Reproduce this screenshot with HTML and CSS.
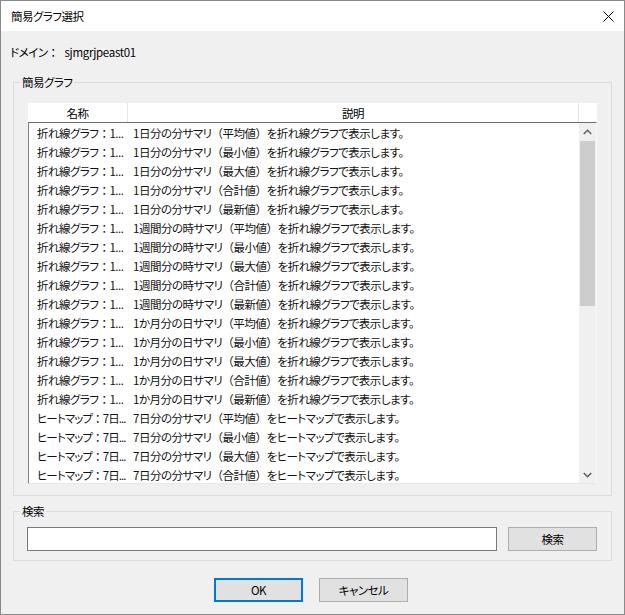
FILE: index.html
```html
<!DOCTYPE html>
<html lang="ja">
<head>
<meta charset="utf-8">
<title>簡易グラフ選択</title>
<link rel="stylesheet" href="styles.css">
</head>
<body>
<div class="window">
  <div class="titlebar">
    <span class="title">簡易グラフ選択</span>
    <span class="close"><svg width="11" height="11" viewBox="0 0 11 11"><path d="M0.5 0.5 L10.5 10.5 M10.5 0.5 L0.5 10.5" stroke="#000" stroke-width="1" fill="none"/></svg></span>
  </div>
  <div class="domain"><span>ドメイン<span class="fw">：</span></span><span class="domain-value">sjmgrjpeast01</span></div>

  <fieldset class="group group-graph">
    <legend>簡易グラフ</legend>
    <div class="header">
      <div class="hcol hcol-name">名称</div>
      <div class="hcol hcol-desc">説明</div>
      <div class="hcol hcol-rest"></div>
    </div>
    <div class="list">
      <div class="rows">
        <div class="row"><span class="c1">折れ線グラフ<span class="fw">：</span>1...</span><span class="c2">1日分の分サマリ<span class="fw">（</span>平均値<span class="fw">）</span>を折れ線グラフで表示します。</span></div>
        <div class="row"><span class="c1">折れ線グラフ<span class="fw">：</span>1...</span><span class="c2">1日分の分サマリ<span class="fw">（</span>最小値<span class="fw">）</span>を折れ線グラフで表示します。</span></div>
        <div class="row"><span class="c1">折れ線グラフ<span class="fw">：</span>1...</span><span class="c2">1日分の分サマリ<span class="fw">（</span>最大値<span class="fw">）</span>を折れ線グラフで表示します。</span></div>
        <div class="row"><span class="c1">折れ線グラフ<span class="fw">：</span>1...</span><span class="c2">1日分の分サマリ<span class="fw">（</span>合計値<span class="fw">）</span>を折れ線グラフで表示します。</span></div>
        <div class="row"><span class="c1">折れ線グラフ<span class="fw">：</span>1...</span><span class="c2">1日分の分サマリ<span class="fw">（</span>最新値<span class="fw">）</span>を折れ線グラフで表示します。</span></div>
        <div class="row"><span class="c1">折れ線グラフ<span class="fw">：</span>1...</span><span class="c2">1週間分の時サマリ<span class="fw">（</span>平均値<span class="fw">）</span>を折れ線グラフで表示します。</span></div>
        <div class="row"><span class="c1">折れ線グラフ<span class="fw">：</span>1...</span><span class="c2">1週間分の時サマリ<span class="fw">（</span>最小値<span class="fw">）</span>を折れ線グラフで表示します。</span></div>
        <div class="row"><span class="c1">折れ線グラフ<span class="fw">：</span>1...</span><span class="c2">1週間分の時サマリ<span class="fw">（</span>最大値<span class="fw">）</span>を折れ線グラフで表示します。</span></div>
        <div class="row"><span class="c1">折れ線グラフ<span class="fw">：</span>1...</span><span class="c2">1週間分の時サマリ<span class="fw">（</span>合計値<span class="fw">）</span>を折れ線グラフで表示します。</span></div>
        <div class="row"><span class="c1">折れ線グラフ<span class="fw">：</span>1...</span><span class="c2">1週間分の時サマリ<span class="fw">（</span>最新値<span class="fw">）</span>を折れ線グラフで表示します。</span></div>
        <div class="row"><span class="c1">折れ線グラフ<span class="fw">：</span>1...</span><span class="c2">1か月分の日サマリ<span class="fw">（</span>平均値<span class="fw">）</span>を折れ線グラフで表示します。</span></div>
        <div class="row"><span class="c1">折れ線グラフ<span class="fw">：</span>1...</span><span class="c2">1か月分の日サマリ<span class="fw">（</span>最小値<span class="fw">）</span>を折れ線グラフで表示します。</span></div>
        <div class="row"><span class="c1">折れ線グラフ<span class="fw">：</span>1...</span><span class="c2">1か月分の日サマリ<span class="fw">（</span>最大値<span class="fw">）</span>を折れ線グラフで表示します。</span></div>
        <div class="row"><span class="c1">折れ線グラフ<span class="fw">：</span>1...</span><span class="c2">1か月分の日サマリ<span class="fw">（</span>合計値<span class="fw">）</span>を折れ線グラフで表示します。</span></div>
        <div class="row"><span class="c1">折れ線グラフ<span class="fw">：</span>1...</span><span class="c2">1か月分の日サマリ<span class="fw">（</span>最新値<span class="fw">）</span>を折れ線グラフで表示します。</span></div>
        <div class="row"><span class="c1 c1-tight">ヒートマップ<span class="fw">：</span>7日...</span><span class="c2">7日分の分サマリ<span class="fw">（</span>平均値<span class="fw">）</span>をヒートマップで表示します。</span></div>
        <div class="row"><span class="c1 c1-tight">ヒートマップ<span class="fw">：</span>7日...</span><span class="c2">7日分の分サマリ<span class="fw">（</span>最小値<span class="fw">）</span>をヒートマップで表示します。</span></div>
        <div class="row"><span class="c1 c1-tight">ヒートマップ<span class="fw">：</span>7日...</span><span class="c2">7日分の分サマリ<span class="fw">（</span>最大値<span class="fw">）</span>をヒートマップで表示します。</span></div>
        <div class="row"><span class="c1 c1-tight">ヒートマップ<span class="fw">：</span>7日...</span><span class="c2">7日分の分サマリ<span class="fw">（</span>合計値<span class="fw">）</span>をヒートマップで表示します。</span></div>
      </div>
      <div class="scrollbar">
        <div class="sb-btn"><svg width="9" height="6" viewBox="0 0 9 6"><path d="M0.8 5 L4.5 1.3 L8.2 5" stroke="#606060" stroke-width="1.6" fill="none"/></svg></div>
        <div class="sb-track">
          <div class="sb-thumb"></div>
        </div>
        <div class="sb-btn"><svg width="9" height="6" viewBox="0 0 9 6"><path d="M0.8 1 L4.5 4.7 L8.2 1" stroke="#606060" stroke-width="1.6" fill="none"/></svg></div>
      </div>
    </div>
  </fieldset>

  <fieldset class="group group-search">
    <legend>検索</legend>
    <div class="search-row">
      <div class="search-input"></div>
      <button class="btn btn-search">検索</button>
    </div>
  </fieldset>

  <div class="actions">
    <button class="btn btn-ok">OK</button>
    <button class="btn">キャンセル</button>
  </div>
</div>
</body>
</html>
```
FILE: styles.css
```css
* {
  box-sizing: border-box;
}

html, body {
  margin: 0;
  padding: 0;
}

body {
  width: 625px;
  height: 615px;
  background: #f0f0f0;
  color: #000;
  font-family: "Noto Sans CJK JP", "Noto Sans", sans-serif;
  font-size: 11.5px;
  line-height: 16px;
  letter-spacing: -0.5px;
  font-feature-settings: "palt";
}

.fw {
  font-feature-settings: normal;
}

.window {
  width: 625px;
  height: 615px;
  border: 1px solid #8a8a8a;
  background: #f0f0f0;
  display: flex;
  flex-direction: column;
}

.titlebar {
  height: 30px;
  flex: none;
  background: #fff;
  display: flex;
  align-items: center;
  justify-content: space-between;
  padding-left: 10px;
}

.close {
  width: 32px;
  height: 30px;
  display: flex;
  align-items: center;
  justify-content: center;
}

.domain {
  margin-top: 13px;
  padding-left: 9px;
}

.domain-value {
  margin-left: 6px;
  letter-spacing: -0.3px;
}

.group {
  margin: 0 12px;
  border: 1px solid #dcdcdc;
  min-width: 0;
}

.group legend {
  padding: 0 2px;
  line-height: 16px;
}

.group-graph {
  margin-top: 14px;
  padding: 13px 14px 11px 14px;
}

.group-graph legend {
  margin-left: -8px;
}

.header {
  display: flex;
  height: 19px;
  background: #fff;
  align-items: stretch;
}

.hcol {
  display: flex;
  align-items: center;
  justify-content: center;
}

.hcol-name {
  width: 100px;
  border-right: 1px solid #e5e5e5;
}

.hcol-desc {
  width: 451px;
  border-right: 1px solid #e5e5e5;
}

.hcol-rest {
  flex: 1;
}

.list {
  display: flex;
  height: 362px;
  background: #fff;
  border-top: 1px solid #6e6e6e;
  border-left: 1px solid #828282;
  border-right: 1px solid #f8f8f8;
  border-bottom: 1px solid #e8e8e8;
}

.rows {
  flex: 1;
  overflow: hidden;
}

.row {
  display: flex;
  height: 19px;
  align-items: center;
  white-space: nowrap;
  color: #111;
}

.c1 {
  width: 99px;
  flex: none;
  padding-left: 8px;
}

.c1-tight {
  letter-spacing: -0.9px;
}

.c2 {
  padding-left: 5px;
}

.scrollbar {
  width: 17px;
  flex: none;
  background: #f0f0f0;
  display: flex;
  flex-direction: column;
}

.sb-btn {
  height: 17px;
  flex: none;
  display: flex;
  align-items: center;
  justify-content: center;
}

.sb-track {
  flex: 1;
  padding-top: 1px;
}

.sb-thumb {
  height: 165px;
  margin: 0 1px;
  background: #cdcdcd;
}

.group-search {
  margin-top: 7px;
  padding: 8px 14px 9px 13px;
}

.group-search legend {
  margin-left: -7px;
}

.search-row {
  display: flex;
  align-items: center;
}

.search-input {
  width: 470px;
  height: 24px;
  background: #fff;
  border: 1px solid #7a7a7a;
}

.btn {
  width: 89px;
  height: 24px;
  padding: 0;
  background: #e1e1e1;
  border: 1px solid #adadad;
  font: inherit;
  letter-spacing: inherit;
  color: #000;
}

.btn-search {
  margin-left: 11px;
}

.actions {
  margin-top: 17px;
  display: flex;
  justify-content: center;
  gap: 16px;
  padding-right: 3px;
}

.btn-ok {
  border: 2px solid #0078d7;
}
```
